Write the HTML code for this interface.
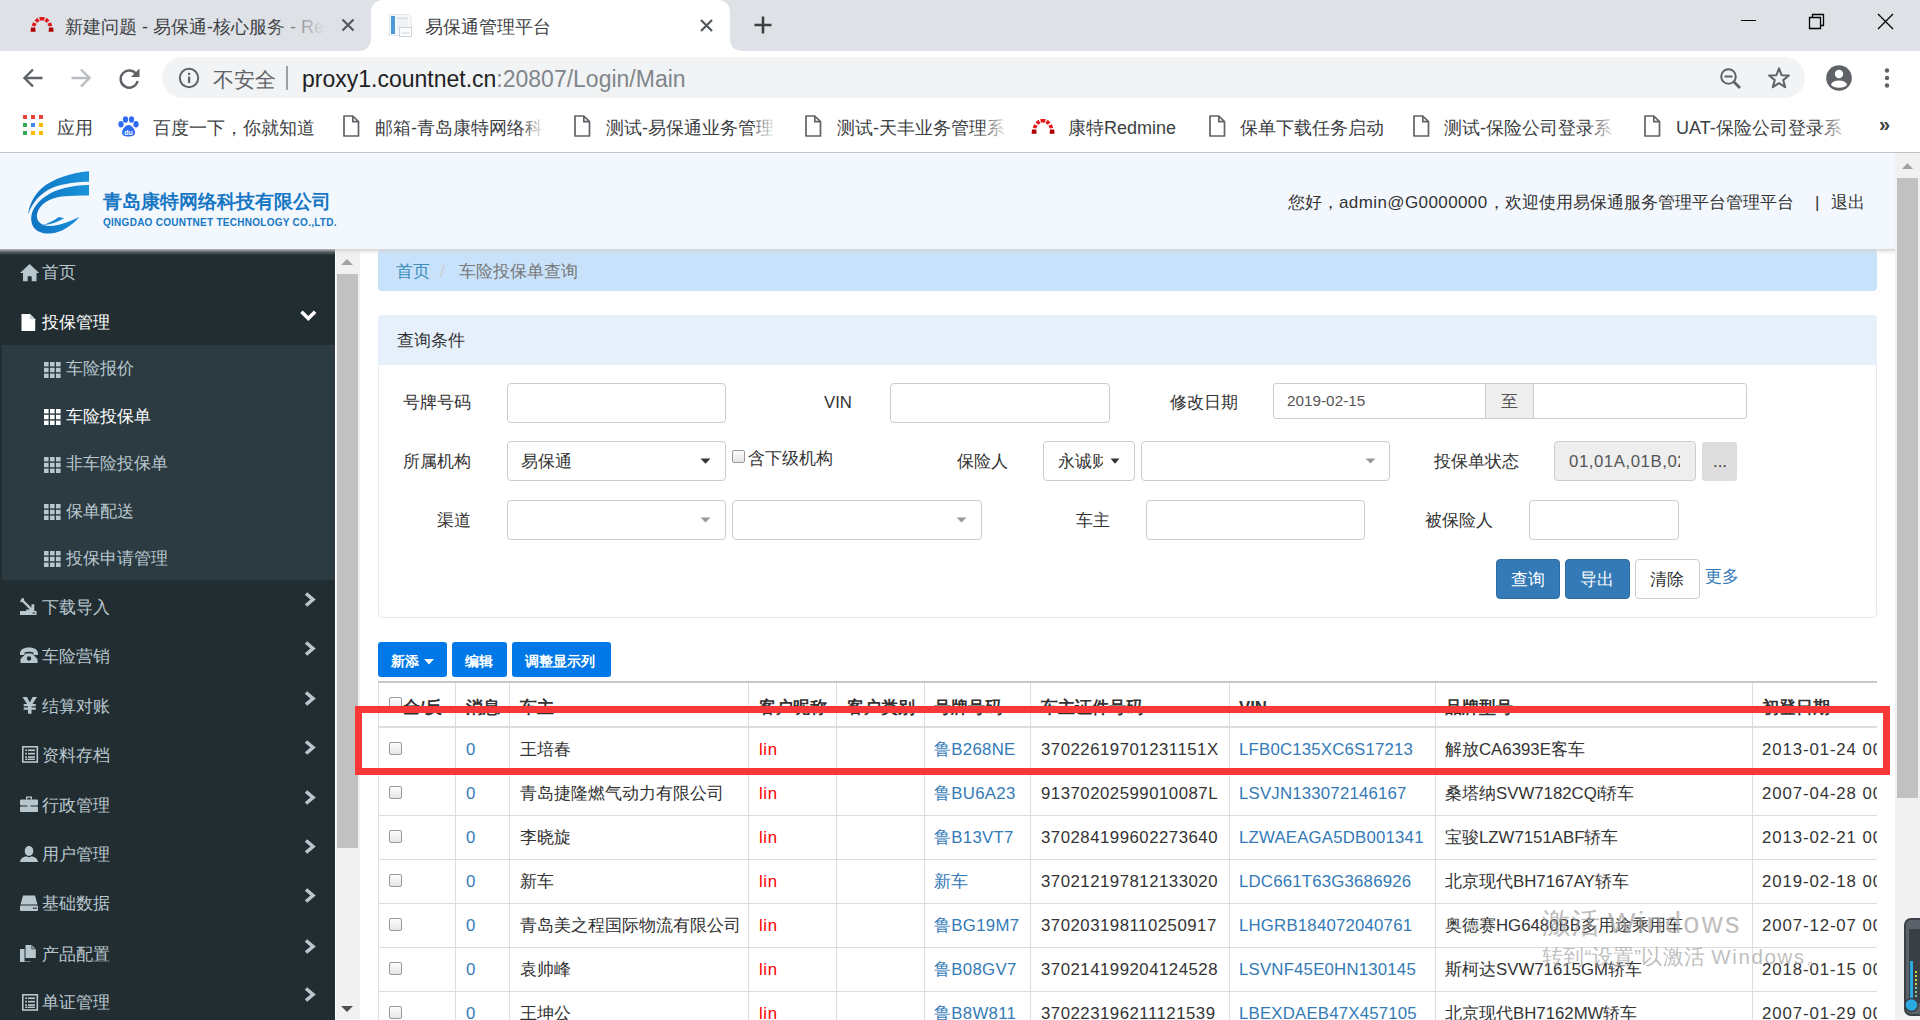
<!DOCTYPE html>
<html><head><meta charset="utf-8">
<style>
*{box-sizing:border-box;margin:0;padding:0}
html,body{width:1920px;height:1020px;overflow:hidden;font-family:"Liberation Sans",sans-serif;background:#fff;color:#333}
.a{position:absolute;white-space:nowrap;line-height:1.3}
svg{position:absolute;overflow:visible}
/* chrome */
#tabs{left:0;top:0;width:1920px;height:51px;background:#dee1e6}
.tt{font-size:18px;color:#3c4043;top:15.5px}
#toolbar{left:0;top:51px;width:1920px;height:53px;background:#fff}
#omni{left:162px;top:57px;width:1643px;height:41px;background:#f1f3f4;border-radius:21px}
#bm{left:0;top:104px;width:1920px;height:49px;background:#fff;border-bottom:1px solid #c4c4c4}
.bt{font-size:18px;color:#3c4043;top:117px}
/* page */
#hdr{left:0;top:153px;width:1895px;height:96px;background:#f3f8fe}
#side{left:0;top:249px;width:335px;height:771px;background:#222d32}
#sub{left:2px;top:345px;width:333px;height:235px;background:#2c3b41}
.mi{font-size:16.8px;color:#b8c7ce;left:42px}
.si{font-size:16.8px;color:#b8c7ce;left:66px}
#sscroll{left:336px;top:249px;width:24px;height:770px;background:#f1f1f1}
#sthumb{left:337px;top:274px;width:21px;height:574px;background:#c1c1c1}
#pscroll{left:1895px;top:153px;width:25px;height:867px;background:#f1f1f1}
#pthumb{left:1897px;top:178px;width:21px;height:620px;background:#c1c1c1}
#crumb{left:378px;top:249px;width:1499px;height:42px;background:#c8e2fb;border-radius:4px}
#panel{left:378px;top:315px;width:1499px;height:303px;border:1px solid #dfe9f4;border-radius:4px;background:#fff}
#phead{left:378px;top:315px;width:1499px;height:50px;background:#e6f0fb;border-radius:4px 4px 0 0}
.lbl{font-size:16.8px;color:#333;margin-top:2px}
.inp{border:1px solid #ccc;border-radius:4px;background:#fff}
.btnb{background:#0078e7;border-radius:3px;color:#fff;font-size:14px;text-align:center}
.tdline{background:#ddd}
.cell{font-size:16.8px;color:#333;margin-top:2px}
.lnk{color:#337ab7}
.red{color:#f00}
.ls{letter-spacing:0.5px}
.hd{font-size:16.8px;font-weight:bold;color:#333;margin-top:2px}
.cb{width:13px;height:13px;border:1px solid #999;border-radius:2px;background:linear-gradient(#fdfdfd,#e6e6e6)}
</style></head><body>
<!-- CHROME TABS -->
<div class="a" id="tabs"></div>
<svg style="left:358px;top:0" width="396" height="51" viewBox="0 0 396 51"><path d="M0 51 C8 51 13 47 13 38 V12 C13 5 18 0 25 0 H360 C367 0 372 5 372 12 V38 C372 47 377 51 385 51 Z" fill="#fff"/></svg>
<svg style="left:30px;top:16px" width="24" height="16" viewBox="0 0 24 16"><g fill="#c00"><path d="M1 11.5h4.2l0.4 4.3H0.6z" fill="#b10000"/><path d="M19 11.5h4.2l0.4 4.3h-5z" fill="#b10000"/><path d="M1.8 9.8l1.2-3.6 3.6 1.6-1.4 2.8z" fill="#e0181b"/><path d="M22.2 9.8l-1.2-3.6-3.6 1.6 1.4 2.8z" fill="#e0181b"/><path d="M4.5 4.6l2.8-2.8 2.3 3.3-2.3 1.6z" fill="#e0181b"/><path d="M19.5 4.6l-2.8-2.8-2.3 3.3 2.3 1.6z" fill="#e0181b"/><path d="M9.3 1l5.4 0-0.6 3.6h-4.2z" fill="#e0181b"/></g></svg>
<div class="a tt" style="left:65px">新建问题 - 易保通-核心服务 - Re</div>
<div class="a" style="left:270px;top:10px;width:62px;height:32px;background:linear-gradient(90deg,rgba(222,225,230,0),#dee1e6 90%)"></div>
<svg style="left:341px;top:18px" width="14" height="14" viewBox="0 0 14 14"><path d="M1.5 1.5L12.5 12.5M12.5 1.5L1.5 12.5" stroke="#54585d" stroke-width="2.2"/></svg>
<svg style="left:389px;top:13px" width="24" height="24" viewBox="0 0 24 24"><path d="M0.5 1.5H19L22 4.5V22.5H0.5z" fill="#f7f8fa" stroke="#e3e6ea"/><rect x="2" y="3" width="4" height="18" fill="#4e9ad8"/><rect x="8" y="4" width="11" height="3" fill="#e2e6eb"/><rect x="8" y="8" width="11" height="9" fill="#eef1f5"/><rect x="10.5" y="14.5" width="12" height="9" fill="#fbfcfd" stroke="#cfd4da"/><rect x="12.5" y="19" width="8" height="2" fill="#e6e9ed"/></svg>
<div class="a tt" style="left:425px">易保通管理平台</div>
<svg style="left:700px;top:19px" width="13" height="13" viewBox="0 0 13 13"><path d="M1 1L12 12M12 1L1 12" stroke="#54585d" stroke-width="2.2"/></svg>
<svg style="left:753px;top:15px" width="20" height="20" viewBox="0 0 20 20"><path d="M10 1.5V18.5M1.5 10H18.5" stroke="#3c4043" stroke-width="2.6"/></svg>
<div class="a" style="left:1741px;top:20px;width:15px;height:1px;background:#000"></div>
<svg style="left:1808px;top:13px" width="18" height="17" viewBox="0 0 18 17"><path d="M1.5 4.5h11v11h-11z M4.5 4.5v-3h11v11h-3" fill="none" stroke="#000" stroke-width="1.3"/></svg>
<svg style="left:1877px;top:13px" width="17" height="17" viewBox="0 0 17 17"><path d="M1 1L16 16M16 1L1 16" stroke="#000" stroke-width="1.3"/></svg>
<div class="a" id="toolbar"></div>
<svg style="left:22px;top:67px" width="22" height="22" viewBox="0 0 22 22"><path d="M20.5 11H3.5M11 2.5L2.5 11L11 19.5" fill="none" stroke="#5f6368" stroke-width="2.4"/></svg>
<svg style="left:70px;top:67px" width="22" height="22" viewBox="0 0 22 22"><path d="M1.5 11H18.5M11 2.5L19.5 11L11 19.5" fill="none" stroke="#b9bcc0" stroke-width="2.4"/></svg>
<svg style="left:118px;top:67px" width="23" height="23" viewBox="0 0 23 23"><path d="M18.5 7.5A8.6 8.6 0 1 0 19.6 14" fill="none" stroke="#5f6368" stroke-width="2.4"/><path d="M21.5 1.5V10H13z" fill="#5f6368"/></svg>
<div class="a" id="omni"></div>
<svg style="left:178px;top:67px" width="22" height="22" viewBox="0 0 22 22"><circle cx="11" cy="11" r="9.2" fill="none" stroke="#5f6368" stroke-width="2"/><rect x="10" y="9.5" width="2.2" height="6.5" fill="#5f6368"/><rect x="10" y="5.8" width="2.2" height="2.2" fill="#5f6368"/></svg>
<div class="a" style="left:213px;top:65.5px;font-size:21px;color:#5f6368">不安全</div>
<div class="a" style="left:286px;top:66px;width:1.5px;height:24px;background:#9aa0a6"></div>
<div class="a" style="left:302px;top:65px;font-size:23px;color:#202124">proxy1.countnet.cn<span style="color:#80868b">:20807/Login/Main</span></div>
<svg style="left:1719px;top:67px" width="24" height="24" viewBox="0 0 24 24"><circle cx="9.5" cy="9.5" r="7.3" fill="none" stroke="#5f6368" stroke-width="2"/><path d="M5.5 9.5h8" stroke="#5f6368" stroke-width="2"/><path d="M14.8 14.8l6.2 6.2" stroke="#5f6368" stroke-width="2.8"/></svg>
<svg style="left:1767px;top:66px" width="24" height="24" viewBox="0 0 24 24"><path d="M12 2.3l2.6 6.9 7.3 0.3-5.7 4.6 2 7.1L12 17.2 5.8 21.2l2-7.1-5.7-4.6 7.3-0.3z" fill="none" stroke="#5f6368" stroke-width="2" stroke-linejoin="round"/></svg>
<svg style="left:1826px;top:65px" width="26" height="26" viewBox="0 0 26 26"><circle cx="13" cy="13" r="12.8" fill="#5f6368"/><circle cx="13" cy="9" r="4.2" fill="#fff"/><ellipse cx="13" cy="19.2" rx="7.8" ry="3.6" fill="#fff"/></svg>
<svg style="left:1883px;top:67px" width="8" height="22" viewBox="0 0 8 22"><circle cx="4" cy="3.5" r="2.2" fill="#5f6368"/><circle cx="4" cy="11" r="2.2" fill="#5f6368"/><circle cx="4" cy="18.5" r="2.2" fill="#5f6368"/></svg>
<div class="a" id="bm"></div>
<svg style="left:23px;top:115px" width="20" height="20" viewBox="0 0 20 20"><rect x="0" y="0" width="4" height="4" fill="#ea4335"/><rect x="8" y="0" width="4" height="4" fill="#ea4335"/><rect x="16" y="0" width="4" height="4" fill="#ea4335"/><rect x="0" y="8" width="4" height="4" fill="#34a853"/><rect x="8" y="8" width="4" height="4" fill="#4285f4"/><rect x="16" y="8" width="4" height="4" fill="#fbbc05"/><rect x="0" y="16" width="4" height="4" fill="#34a853"/><rect x="8" y="16" width="4" height="4" fill="#fbbc05"/><rect x="16" y="16" width="4" height="4" fill="#fbbc05"/></svg>
<div class="a bt" style="left:57px">应用</div>
<svg style="left:118px;top:116px" width="21" height="21" viewBox="0 0 21 21"><g fill="#2f6cf6"><ellipse cx="3" cy="8.3" rx="2.6" ry="3.2"/><ellipse cx="7.5" cy="3.5" rx="2.6" ry="3.2"/><ellipse cx="13.5" cy="3.5" rx="2.6" ry="3.2"/><ellipse cx="18" cy="8.3" rx="2.6" ry="3.2"/><path d="M10.5 9C7 9 4 14 4 16.5 4 19.5 6.5 20.5 10.5 20.5 14.5 20.5 17 19.5 17 16.5 17 14 14 9 10.5 9z"/></g><text x="10.5" y="18.6" font-size="7" font-weight="bold" fill="#fff" text-anchor="middle" font-family="Liberation Sans">du</text></svg>
<div class="a bt" style="left:153px">百度一下，你就知道</div>
<svg style="left:343px;top:115px" width="17" height="22" viewBox="0 0 17 22"><path d="M1 1H9.8L15.5 6.7V21H1z M9.8 1V6.7H15.5" fill="none" stroke="#5f6368" stroke-width="1.7" stroke-linejoin="round"/></svg>
<div class="a bt" style="left:375px">邮箱-青岛康特网络科</div>
<svg style="left:574px;top:115px" width="17" height="22" viewBox="0 0 17 22"><path d="M1 1H9.8L15.5 6.7V21H1z M9.8 1V6.7H15.5" fill="none" stroke="#5f6368" stroke-width="1.7" stroke-linejoin="round"/></svg>
<div class="a bt" style="left:606px">测试-易保通业务管理</div>
<svg style="left:805px;top:115px" width="17" height="22" viewBox="0 0 17 22"><path d="M1 1H9.8L15.5 6.7V21H1z M9.8 1V6.7H15.5" fill="none" stroke="#5f6368" stroke-width="1.7" stroke-linejoin="round"/></svg>
<div class="a bt" style="left:837px">测试-天丰业务管理系</div>
<svg style="left:1031px;top:118px" width="24.0" height="16.0" viewBox="0 0 24 16"><g fill="#c00"><path d="M1 11.5h4.2l0.4 4.3H0.6z" fill="#b10000"/><path d="M19 11.5h4.2l0.4 4.3h-5z" fill="#b10000"/><path d="M1.8 9.8l1.2-3.6 3.6 1.6-1.4 2.8z" fill="#e0181b"/><path d="M22.2 9.8l-1.2-3.6-3.6 1.6 1.4 2.8z" fill="#e0181b"/><path d="M4.5 4.6l2.8-2.8 2.3 3.3-2.3 1.6z" fill="#e0181b"/><path d="M19.5 4.6l-2.8-2.8-2.3 3.3 2.3 1.6z" fill="#e0181b"/><path d="M9.3 1l5.4 0-0.6 3.6h-4.2z" fill="#e0181b"/></g></svg>
<div class="a bt" style="left:1068px">康特Redmine</div>
<svg style="left:1209px;top:115px" width="17" height="22" viewBox="0 0 17 22"><path d="M1 1H9.8L15.5 6.7V21H1z M9.8 1V6.7H15.5" fill="none" stroke="#5f6368" stroke-width="1.7" stroke-linejoin="round"/></svg>
<div class="a bt" style="left:1240px">保单下载任务启动</div>
<svg style="left:1413px;top:115px" width="17" height="22" viewBox="0 0 17 22"><path d="M1 1H9.8L15.5 6.7V21H1z M9.8 1V6.7H15.5" fill="none" stroke="#5f6368" stroke-width="1.7" stroke-linejoin="round"/></svg>
<div class="a bt" style="left:1444px">测试-保险公司登录系</div>
<svg style="left:1644px;top:115px" width="17" height="22" viewBox="0 0 17 22"><path d="M1 1H9.8L15.5 6.7V21H1z M9.8 1V6.7H15.5" fill="none" stroke="#5f6368" stroke-width="1.7" stroke-linejoin="round"/></svg>
<div class="a bt" style="left:1676px">UAT-保险公司登录系</div>
<div class="a" style="left:520px;top:112px;width:30px;height:30px;background:linear-gradient(90deg,rgba(255,255,255,0),#fff 85%)"></div>
<div class="a" style="left:751px;top:112px;width:30px;height:30px;background:linear-gradient(90deg,rgba(255,255,255,0),#fff 85%)"></div>
<div class="a" style="left:982px;top:112px;width:30px;height:30px;background:linear-gradient(90deg,rgba(255,255,255,0),#fff 85%)"></div>
<div class="a" style="left:1590px;top:112px;width:30px;height:30px;background:linear-gradient(90deg,rgba(255,255,255,0),#fff 85%)"></div>
<div class="a" style="left:1822px;top:112px;width:30px;height:30px;background:linear-gradient(90deg,rgba(255,255,255,0),#fff 85%)"></div>
<div class="a" style="left:1879px;top:112px;font-size:20px;font-weight:bold;color:#3c4043;line-height:24px">&raquo;</div>

<!-- PAGE HEADER -->
<div class="a" id="hdr"></div>
<svg style="left:20px;top:160px" width="80" height="85" viewBox="0 0 80 85"><defs><linearGradient id="lg" x1="0" y1="0" x2="1" y2="0"><stop offset="0" stop-color="#0f74c4"/><stop offset="1" stop-color="#1a92d9"/></linearGradient></defs>
<path d="M69 11.2C50 13 32 19 22 28C13 36 9 46 8.1 54.6C12 43 20 33 33 27.5C44 23.5 58 21.8 69 21.8Z" fill="url(#lg)"/>
<path d="M69 25C52 25 36 29 26 36C14 44 10 54 11.5 62C13 71 22 74 30 73.5C42 73 52 65 59.6 57C52 60 40 66 30 66C20 66 16 60 17 54C19 44 30 38 42 36.5C50 35.5 60 35.4 69 35.4Z" fill="url(#lg)"/>
<path d="M22.5 65C30 63 36 59 39 57L44 58.3C38 62 30 65 22.5 65Z" fill="#1585d0"/></svg>

<div class="a" style="left:103px;top:190px;font-size:19px;font-weight:bold;color:#1777c4">青岛康特网络科技有限公司</div>
<div class="a" style="left:103px;top:216px;font-size:10px;font-weight:bold;color:#1777c4;letter-spacing:0.27px">QINGDAO COUNTNET TECHNOLOGY CO.,LTD.</div>
<div class="a" style="left:1288px;top:191.5px;font-size:17px;color:#333">您好，<span style="letter-spacing:0.4px">admin@G0000000</span>，欢迎使用易保通服务管理平台管理平台</div>
<div class="a" style="left:1815px;top:191.5px;font-size:17px;color:#333">|</div><div class="a" style="left:1831px;top:191.5px;font-size:17px;color:#333">退出</div>

<!-- SIDEBAR -->
<div class="a" id="side"></div>

<div class="a" id="sub"></div>
<svg style="left:20px;top:264px" width="20" height="18" viewBox="0 0 20 18"><path d="M9.6 0L19.2 9H16.5V17.3H11.7V12.3H7.7V17.3H3V9H0z" fill="#b8c7ce"/></svg>
<div class="a mi" style="top:262px">首页</div>
<svg style="left:21px;top:314px" width="15" height="18" viewBox="0 0 15 18"><path d="M0.5 0H9L14.2 5.2V17H0.5z" fill="#fff"/><path d="M9 0V5.2H14.2" fill="#c9d3da"/></svg>
<div class="a mi" style="top:312px;color:#fff">投保管理</div>
<svg style="left:299px;top:308px" width="19" height="15" viewBox="0 0 19 15"><path d="M2.5 3.8L9.3 10.5L16.1 3.8" fill="none" stroke="#fff" stroke-width="3.6"/></svg>
<svg style="left:44px;top:361.8px" width="17" height="17" viewBox="0 0 17 17"><rect x="0" y="0.0" width="4.6" height="4.4" fill="#b8c7ce"/><rect x="0" y="5.8" width="4.6" height="4.4" fill="#b8c7ce"/><rect x="0" y="11.6" width="4.6" height="4.4" fill="#b8c7ce"/><rect x="6" y="0.0" width="4.6" height="4.4" fill="#b8c7ce"/><rect x="6" y="5.8" width="4.6" height="4.4" fill="#b8c7ce"/><rect x="6" y="11.6" width="4.6" height="4.4" fill="#b8c7ce"/><rect x="12" y="0.0" width="4.6" height="4.4" fill="#b8c7ce"/><rect x="12" y="5.8" width="4.6" height="4.4" fill="#b8c7ce"/><rect x="12" y="11.6" width="4.6" height="4.4" fill="#b8c7ce"/></svg>
<div class="a si" style="top:358px;color:#b8c7ce">车险报价</div>
<svg style="left:44px;top:409.3px" width="17" height="17" viewBox="0 0 17 17"><rect x="0" y="0.0" width="4.6" height="4.4" fill="#fff"/><rect x="0" y="5.8" width="4.6" height="4.4" fill="#fff"/><rect x="0" y="11.6" width="4.6" height="4.4" fill="#fff"/><rect x="6" y="0.0" width="4.6" height="4.4" fill="#fff"/><rect x="6" y="5.8" width="4.6" height="4.4" fill="#fff"/><rect x="6" y="11.6" width="4.6" height="4.4" fill="#fff"/><rect x="12" y="0.0" width="4.6" height="4.4" fill="#fff"/><rect x="12" y="5.8" width="4.6" height="4.4" fill="#fff"/><rect x="12" y="11.6" width="4.6" height="4.4" fill="#fff"/></svg>
<div class="a si" style="top:405.5px;color:#fff">车险投保单</div>
<svg style="left:44px;top:456.8px" width="17" height="17" viewBox="0 0 17 17"><rect x="0" y="0.0" width="4.6" height="4.4" fill="#b8c7ce"/><rect x="0" y="5.8" width="4.6" height="4.4" fill="#b8c7ce"/><rect x="0" y="11.6" width="4.6" height="4.4" fill="#b8c7ce"/><rect x="6" y="0.0" width="4.6" height="4.4" fill="#b8c7ce"/><rect x="6" y="5.8" width="4.6" height="4.4" fill="#b8c7ce"/><rect x="6" y="11.6" width="4.6" height="4.4" fill="#b8c7ce"/><rect x="12" y="0.0" width="4.6" height="4.4" fill="#b8c7ce"/><rect x="12" y="5.8" width="4.6" height="4.4" fill="#b8c7ce"/><rect x="12" y="11.6" width="4.6" height="4.4" fill="#b8c7ce"/></svg>
<div class="a si" style="top:453px;color:#b8c7ce">非车险投保单</div>
<svg style="left:44px;top:504.3px" width="17" height="17" viewBox="0 0 17 17"><rect x="0" y="0.0" width="4.6" height="4.4" fill="#b8c7ce"/><rect x="0" y="5.8" width="4.6" height="4.4" fill="#b8c7ce"/><rect x="0" y="11.6" width="4.6" height="4.4" fill="#b8c7ce"/><rect x="6" y="0.0" width="4.6" height="4.4" fill="#b8c7ce"/><rect x="6" y="5.8" width="4.6" height="4.4" fill="#b8c7ce"/><rect x="6" y="11.6" width="4.6" height="4.4" fill="#b8c7ce"/><rect x="12" y="0.0" width="4.6" height="4.4" fill="#b8c7ce"/><rect x="12" y="5.8" width="4.6" height="4.4" fill="#b8c7ce"/><rect x="12" y="11.6" width="4.6" height="4.4" fill="#b8c7ce"/></svg>
<div class="a si" style="top:500.5px;color:#b8c7ce">保单配送</div>
<svg style="left:44px;top:551.3px" width="17" height="17" viewBox="0 0 17 17"><rect x="0" y="0.0" width="4.6" height="4.4" fill="#b8c7ce"/><rect x="0" y="5.8" width="4.6" height="4.4" fill="#b8c7ce"/><rect x="0" y="11.6" width="4.6" height="4.4" fill="#b8c7ce"/><rect x="6" y="0.0" width="4.6" height="4.4" fill="#b8c7ce"/><rect x="6" y="5.8" width="4.6" height="4.4" fill="#b8c7ce"/><rect x="6" y="11.6" width="4.6" height="4.4" fill="#b8c7ce"/><rect x="12" y="0.0" width="4.6" height="4.4" fill="#b8c7ce"/><rect x="12" y="5.8" width="4.6" height="4.4" fill="#b8c7ce"/><rect x="12" y="11.6" width="4.6" height="4.4" fill="#b8c7ce"/></svg>
<div class="a si" style="top:547.5px;color:#b8c7ce">投保申请管理</div>
<svg style="left:20px;top:598.1px" width="18" height="18" viewBox="0 0 18 18"><path d="M1.5 0.5L3.8 0 4.2 2.5 11.5 9.8V6.2H14.3V14.3H6.2V11.5H9.8L2.5 4.2 0 3.8z" fill="#b8c7ce"/><rect x="0" y="13" width="16.5" height="4" fill="#b8c7ce"/><rect x="12.5" y="14.6" width="2.5" height="1" fill="#222d32"/></svg>
<div class="a mi" style="top:596.6px">下载导入</div>
<svg style="left:303px;top:590.6px" width="14" height="18" viewBox="0 0 14 18"><path d="M3 2.5L10 8.5L3 14.5" fill="none" stroke="#b8c7ce" stroke-width="3.6"/></svg>
<svg style="left:20px;top:647.1px" width="18" height="18" viewBox="0 0 18 18"><path d="M0 6.5C0 2 5 0.5 9 0.5 13 0.5 18 2 18 6.5V8H13.5V5.8C12.5 5 10.8 4.7 9 4.7 7.2 4.7 5.5 5 4.5 5.8V8H0z" fill="#b8c7ce"/><path d="M6 6.5H12L17.5 12V16H0.5V12z" fill="#b8c7ce"/><circle cx="9" cy="11.5" r="2.2" fill="#222d32"/></svg>
<div class="a mi" style="top:645.6px">车险营销</div>
<svg style="left:303px;top:639.6px" width="14" height="18" viewBox="0 0 14 18"><path d="M3 2.5L10 8.5L3 14.5" fill="none" stroke="#b8c7ce" stroke-width="3.6"/></svg>
<svg style="left:22px;top:697.1px" width="18" height="18" viewBox="0 0 18 18"><path d="M0.5 0H5L7.8 5.5 10.6 0H15L10.5 7H13.8V9.3H9.5V10.5H13.8V12.8H9.5V16.7H6V12.8H1.7V10.5H6V9.3H1.7V7H5z" fill="#b8c7ce"/></svg>
<div class="a mi" style="top:695.6px">结算对账</div>
<svg style="left:303px;top:689.6px" width="14" height="18" viewBox="0 0 14 18"><path d="M3 2.5L10 8.5L3 14.5" fill="none" stroke="#b8c7ce" stroke-width="3.6"/></svg>
<svg style="left:22px;top:746.2px" width="18" height="18" viewBox="0 0 18 18"><rect x="0.8" y="0.8" width="14.5" height="15.2" fill="none" stroke="#b8c7ce" stroke-width="1.6"/><rect x="3.2" y="3.4" width="9.7" height="1.7" fill="#b8c7ce"/><rect x="3.2" y="6.8" width="9.7" height="1.7" fill="#b8c7ce"/><rect x="3.2" y="10.2" width="9.7" height="1.7" fill="#b8c7ce"/><rect x="3.2" y="12.6" width="9.7" height="1.4" fill="#b8c7ce"/><rect x="5" y="3.4" width="1" height="10" fill="#222d32"/></svg>
<div class="a mi" style="top:744.7px">资料存档</div>
<svg style="left:303px;top:738.7px" width="14" height="18" viewBox="0 0 14 18"><path d="M3 2.5L10 8.5L3 14.5" fill="none" stroke="#b8c7ce" stroke-width="3.6"/></svg>
<svg style="left:20px;top:796.0px" width="18" height="18" viewBox="0 0 18 18"><path d="M6 0.5H12V3.5H10.7V1.8H7.3V3.5H6z" fill="#b8c7ce"/><rect x="0" y="3.5" width="18" height="6" rx="1.2" fill="#b8c7ce"/><rect x="0" y="10.5" width="18" height="5.5" rx="1" fill="#b8c7ce"/><rect x="7.5" y="8.3" width="3" height="3.2" fill="#b8c7ce"/></svg>
<div class="a mi" style="top:794.5px">行政管理</div>
<svg style="left:303px;top:788.5px" width="14" height="18" viewBox="0 0 14 18"><path d="M3 2.5L10 8.5L3 14.5" fill="none" stroke="#b8c7ce" stroke-width="3.6"/></svg>
<svg style="left:20px;top:845.9px" width="18" height="18" viewBox="0 0 18 18"><ellipse cx="9" cy="5" rx="4.3" ry="5" fill="#b8c7ce"/><path d="M0 16C0.5 12.5 3 11 6.5 10.3 7.5 11 8.2 11.2 9 11.2 9.8 11.2 10.5 11 11.5 10.3 15 11 17.5 12.5 18 16z" fill="#b8c7ce"/></svg>
<div class="a mi" style="top:844.4px">用户管理</div>
<svg style="left:303px;top:838.4px" width="14" height="18" viewBox="0 0 14 18"><path d="M3 2.5L10 8.5L3 14.5" fill="none" stroke="#b8c7ce" stroke-width="3.6"/></svg>
<svg style="left:20px;top:894.8px" width="18" height="18" viewBox="0 0 18 18"><path d="M3 0.5H15L17.5 9.5H0.5z" fill="#b8c7ce"/><rect x="0" y="10.5" width="18" height="5.5" rx="1" fill="#b8c7ce"/><rect x="13" y="12.5" width="1.5" height="1.5" fill="#222d32"/><rect x="15.2" y="12.5" width="1.5" height="1.5" fill="#222d32"/></svg>
<div class="a mi" style="top:893.3px">基础数据</div>
<svg style="left:303px;top:887.3px" width="14" height="18" viewBox="0 0 14 18"><path d="M3 2.5L10 8.5L3 14.5" fill="none" stroke="#b8c7ce" stroke-width="3.6"/></svg>
<svg style="left:20px;top:945.4px" width="18" height="18" viewBox="0 0 18 18"><path d="M0 4H4.5V16.5H10.5V17H0z" fill="#b8c7ce"/><path d="M5.5 0H11.5L15.8 4.3V13H5.5z" fill="#b8c7ce" /><path d="M11.5 0V4.3H15.8" fill="#222d32"/><path d="M12.3 0.8V3.5H15" fill="#b8c7ce"/><path d="M0 4H4.5V17H10.5" fill="none"/></svg>
<div class="a mi" style="top:943.9px">产品配置</div>
<svg style="left:303px;top:937.9px" width="14" height="18" viewBox="0 0 14 18"><path d="M3 2.5L10 8.5L3 14.5" fill="none" stroke="#b8c7ce" stroke-width="3.6"/></svg>
<svg style="left:22px;top:993.5px" width="18" height="18" viewBox="0 0 18 18"><rect x="0.8" y="0.8" width="14.5" height="15.2" fill="none" stroke="#b8c7ce" stroke-width="1.6"/><rect x="3.2" y="3.4" width="9.7" height="1.7" fill="#b8c7ce"/><rect x="3.2" y="6.8" width="9.7" height="1.7" fill="#b8c7ce"/><rect x="3.2" y="10.2" width="9.7" height="1.7" fill="#b8c7ce"/><rect x="3.2" y="12.6" width="9.7" height="1.4" fill="#b8c7ce"/><rect x="5" y="3.4" width="1" height="10" fill="#222d32"/></svg>
<div class="a mi" style="top:992px">单证管理</div>
<svg style="left:303px;top:986px" width="14" height="18" viewBox="0 0 14 18"><path d="M3 2.5L10 8.5L3 14.5" fill="none" stroke="#b8c7ce" stroke-width="3.6"/></svg>
<div class="a" id="sscroll"></div>
<div class="a" id="sthumb"></div>

<!-- CONTENT -->
<div class="a" id="crumb"></div>
<div class="a" style="left:396px;top:261px;font-size:16.8px;color:#3c8dbc">首页</div>
<div class="a" style="left:440px;top:261px;font-size:16.8px;color:#ccc">/</div>
<div class="a" style="left:459px;top:261px;font-size:16.8px;color:#777">车险投保单查询</div>

<div class="a" id="panel"></div>
<div class="a" id="phead"></div>
<div class="a lbl" style="left:397px;top:328px">查询条件</div>


<!-- FORM ROW1 -->
<div class="a lbl" style="left:403px;top:390px">号牌号码</div>
<div class="a inp" style="left:507px;top:383px;width:219px;height:40px"></div>
<div class="a lbl" style="left:824px;top:390px">VIN</div>
<div class="a inp" style="left:890px;top:383px;width:220px;height:40px"></div>
<div class="a lbl" style="left:1170px;top:390px">修改日期</div>
<div class="a inp" style="left:1273px;top:383px;width:474px;height:36px;border-radius:3px"></div>
<div class="a" style="left:1485px;top:384px;width:49px;height:34px;background:#eee;border-left:1px solid #ccc;border-right:1px solid #ccc"></div>
<div class="a" style="left:1287px;top:391px;font-size:15.3px;color:#555">2019-02-15</div>
<div class="a lbl" style="left:1501px;top:389px;color:#555">至</div>
<!-- FORM ROW2 -->
<div class="a lbl" style="left:403px;top:449px">所属机构</div>
<div class="a inp" style="left:507px;top:441px;width:219px;height:40px"></div>
<div class="a lbl" style="left:521px;top:449px">易保通</div>
<div class="a cb" style="left:732px;top:450px"></div>
<div class="a lbl" style="left:748px;top:446px">含下级机构</div>
<div class="a lbl" style="left:957px;top:449px">保险人</div>
<div class="a inp" style="left:1043px;top:441px;width:92px;height:40px"></div>
<div class="a lbl" style="left:1058px;top:449px;width:45px;overflow:hidden">永诚财</div>
<div class="a inp" style="left:1141px;top:441px;width:249px;height:40px"></div>
<div class="a lbl" style="left:1434px;top:449px">投保单状态</div>
<div class="a inp" style="left:1554px;top:441px;width:142px;height:40px;background:#eee"></div>
<div class="a lbl" style="left:1569px;top:449px;color:#555;width:111px;overflow:hidden;letter-spacing:0.55px">01,01A,01B,02</div>
<div class="a" style="left:1702px;top:442px;width:35px;height:39px;background:#ddd;border-radius:3px"></div>
<div class="a lbl" style="left:1713px;top:449px">...</div>
<!-- FORM ROW3 -->
<div class="a lbl" style="left:437px;top:508px">渠道</div>
<div class="a inp" style="left:507px;top:500px;width:219px;height:40px"></div>
<div class="a inp" style="left:732px;top:500px;width:250px;height:40px"></div>
<div class="a lbl" style="left:1076px;top:508px">车主</div>
<div class="a inp" style="left:1146px;top:500px;width:219px;height:40px"></div>
<div class="a lbl" style="left:1425px;top:508px">被保险人</div>
<div class="a inp" style="left:1529px;top:500px;width:150px;height:40px"></div>
<!-- BUTTONS -->
<div class="a" style="left:1496px;top:559px;width:64px;height:40px;background:#337ab7;border:1px solid #2e6da4;border-radius:4px"></div>
<div class="a lbl" style="left:1511px;top:567px;color:#fff">查询</div>
<div class="a" style="left:1565px;top:559px;width:65px;height:40px;background:#337ab7;border:1px solid #2e6da4;border-radius:4px"></div>
<div class="a lbl" style="left:1580px;top:567px;color:#fff">导出</div>
<div class="a" style="left:1635px;top:559px;width:65px;height:40px;background:#fff;border:1px solid #ccc;border-radius:4px"></div>
<div class="a lbl" style="left:1650px;top:567px">清除</div>
<div class="a lbl" style="left:1705px;top:564px;color:#337ab7">更多</div>


<svg style="left:700px;top:458px" width="11" height="6" viewBox="0 0 11 6"><path d="M0.5 0.5H10.5L5.5 5.8z" fill="#333"/></svg>
<svg style="left:1110px;top:458px" width="10" height="6" viewBox="0 0 10 6"><path d="M0.5 0.5H9.5L5 5.8z" fill="#333"/></svg>
<svg style="left:700px;top:517px" width="11" height="6" viewBox="0 0 11 6"><path d="M0.5 0.5H10.5L5.5 5.5z" fill="#999"/></svg>
<svg style="left:956px;top:517px" width="11" height="6" viewBox="0 0 11 6"><path d="M0.5 0.5H10.5L5.5 5.5z" fill="#999"/></svg>
<svg style="left:1365px;top:458px" width="11" height="6" viewBox="0 0 11 6"><path d="M0.5 0.5H10.5L5.5 5.5z" fill="#999"/></svg>
<!-- TABLE TOOLBAR -->
<div class="a btnb" style="left:378px;top:642px;width:69px;height:35px"></div>
<div class="a" style="left:391px;top:652px;font-size:14.4px;color:#fff;font-weight:bold">新添</div><svg style="left:424px;top:659px" width="10" height="6" viewBox="0 0 10 6"><path d="M0 0H10L5 5.5z" fill="#fff"/></svg>
<div class="a btnb" style="left:452px;top:642px;width:55px;height:35px"></div>
<div class="a" style="left:465px;top:652px;font-size:14.4px;color:#fff;font-weight:bold">编辑</div>
<div class="a btnb" style="left:512px;top:642px;width:99px;height:35px"></div>
<div class="a" style="left:525px;top:652px;font-size:14.4px;color:#fff;font-weight:bold">调整显示列</div>

<!-- TABLE -->
<div class="a" id="tbl" style="left:378px;top:681px;width:1499px;height:339px;overflow:hidden">
<div class="a" style="left:0;top:0;width:1499px;height:2px;background:#c8c8c8"></div>
<div class="a" style="left:0;top:45px;width:1499px;height:2px;background:#ddd"></div>
<div class="a" style="left:0px;top:2px;width:1px;height:339px;background:#ddd"></div>
<div class="a" style="left:77px;top:2px;width:1px;height:339px;background:#ddd"></div>
<div class="a" style="left:131px;top:2px;width:1px;height:339px;background:#ddd"></div>
<div class="a" style="left:370px;top:2px;width:1px;height:339px;background:#ddd"></div>
<div class="a" style="left:458px;top:2px;width:1px;height:339px;background:#ddd"></div>
<div class="a" style="left:546px;top:2px;width:1px;height:339px;background:#ddd"></div>
<div class="a" style="left:652px;top:2px;width:1px;height:339px;background:#ddd"></div>
<div class="a" style="left:851px;top:2px;width:1px;height:339px;background:#ddd"></div>
<div class="a" style="left:1057px;top:2px;width:1px;height:339px;background:#ddd"></div>
<div class="a" style="left:1374px;top:2px;width:1px;height:339px;background:#ddd"></div>
<div class="a hd" style="left:25px;top:14px">全/反</div>
<div class="a hd" style="left:88px;top:14px">消息</div>
<div class="a hd" style="left:142px;top:14px">车主</div>
<div class="a hd" style="left:381px;top:14px">客户昵称</div>
<div class="a hd" style="left:469px;top:14px">客户类别</div>
<div class="a hd" style="left:556px;top:14px">号牌号码</div>
<div class="a hd" style="left:663px;top:14px">车主证件号码</div>
<div class="a hd" style="left:861px;top:14px">VIN</div>
<div class="a hd" style="left:1067px;top:14px">品牌型号</div>
<div class="a hd" style="left:1384px;top:14px">初登日期</div>
<div class="a cb" style="left:11px;top:16px"></div>
<div class="a cb" style="left:11px;top:61px"></div>
<div class="a cell lnk" style="left:88px;top:55.5px">0</div>
<div class="a cell" style="left:142px;top:55.5px">王培春</div>
<div class="a cell red" style="left:381px;top:55.5px;letter-spacing:0.6px">lin</div>
<div class="a cell lnk" style="letter-spacing:0.3px;left:556px;top:55.5px">鲁B268NE</div>
<div class="a cell ls" style="left:663px;top:55.5px">37022619701231151X</div>
<div class="a cell lnk" style="letter-spacing:0.2px;left:861px;top:55.5px">LFB0C135XC6S17213</div>
<div class="a cell" style="left:1067px;top:55.5px">解放CA6393E客车</div>
<div class="a cell" style="letter-spacing:0.9px;left:1384px;top:55.5px">2013-01-24 00:00</div>
<div class="a" style="left:0;top:90px;width:1499px;height:1px;background:#ddd"></div>
<div class="a cb" style="left:11px;top:105px"></div>
<div class="a cell lnk" style="left:88px;top:99.5px">0</div>
<div class="a cell" style="left:142px;top:99.5px">青岛捷隆燃气动力有限公司</div>
<div class="a cell red" style="left:381px;top:99.5px;letter-spacing:0.6px">lin</div>
<div class="a cell lnk" style="letter-spacing:0.3px;left:556px;top:99.5px">鲁BU6A23</div>
<div class="a cell ls" style="left:663px;top:99.5px">91370202599010087L</div>
<div class="a cell lnk" style="letter-spacing:0.2px;left:861px;top:99.5px">LSVJN133072146167</div>
<div class="a cell" style="left:1067px;top:99.5px">桑塔纳SVW7182CQi轿车</div>
<div class="a cell" style="letter-spacing:0.9px;left:1384px;top:99.5px">2007-04-28 00:00</div>
<div class="a" style="left:0;top:134px;width:1499px;height:1px;background:#ddd"></div>
<div class="a cb" style="left:11px;top:149px"></div>
<div class="a cell lnk" style="left:88px;top:143.5px">0</div>
<div class="a cell" style="left:142px;top:143.5px">李晓旋</div>
<div class="a cell red" style="left:381px;top:143.5px;letter-spacing:0.6px">lin</div>
<div class="a cell lnk" style="letter-spacing:0.3px;left:556px;top:143.5px">鲁B13VT7</div>
<div class="a cell ls" style="left:663px;top:143.5px">370284199602273640</div>
<div class="a cell lnk" style="letter-spacing:0.2px;left:861px;top:143.5px">LZWAEAGA5DB001341</div>
<div class="a cell" style="left:1067px;top:143.5px">宝骏LZW7151ABF轿车</div>
<div class="a cell" style="letter-spacing:0.9px;left:1384px;top:143.5px">2013-02-21 00:00</div>
<div class="a" style="left:0;top:178px;width:1499px;height:1px;background:#ddd"></div>
<div class="a cb" style="left:11px;top:193px"></div>
<div class="a cell lnk" style="left:88px;top:187.5px">0</div>
<div class="a cell" style="left:142px;top:187.5px">新车</div>
<div class="a cell red" style="left:381px;top:187.5px;letter-spacing:0.6px">lin</div>
<div class="a cell lnk" style="letter-spacing:0.3px;left:556px;top:187.5px">新车</div>
<div class="a cell ls" style="left:663px;top:187.5px">370212197812133020</div>
<div class="a cell lnk" style="letter-spacing:0.2px;left:861px;top:187.5px">LDC661T63G3686926</div>
<div class="a cell" style="left:1067px;top:187.5px">北京现代BH7167AY轿车</div>
<div class="a cell" style="letter-spacing:0.9px;left:1384px;top:187.5px">2019-02-18 00:00</div>
<div class="a" style="left:0;top:222px;width:1499px;height:1px;background:#ddd"></div>
<div class="a cb" style="left:11px;top:237px"></div>
<div class="a cell lnk" style="left:88px;top:231.5px">0</div>
<div class="a cell" style="left:142px;top:231.5px">青岛美之程国际物流有限公司</div>
<div class="a cell red" style="left:381px;top:231.5px;letter-spacing:0.6px">lin</div>
<div class="a cell lnk" style="letter-spacing:0.3px;left:556px;top:231.5px">鲁BG19M7</div>
<div class="a cell ls" style="left:663px;top:231.5px">370203198110250917</div>
<div class="a cell lnk" style="letter-spacing:0.2px;left:861px;top:231.5px">LHGRB184072040761</div>
<div class="a cell" style="left:1067px;top:231.5px">奥德赛HG6480BB多用途乘用车</div>
<div class="a cell" style="letter-spacing:0.9px;left:1384px;top:231.5px">2007-12-07 00:00</div>
<div class="a" style="left:0;top:266px;width:1499px;height:1px;background:#ddd"></div>
<div class="a cb" style="left:11px;top:281px"></div>
<div class="a cell lnk" style="left:88px;top:275.5px">0</div>
<div class="a cell" style="left:142px;top:275.5px">袁帅峰</div>
<div class="a cell red" style="left:381px;top:275.5px;letter-spacing:0.6px">lin</div>
<div class="a cell lnk" style="letter-spacing:0.3px;left:556px;top:275.5px">鲁B08GV7</div>
<div class="a cell ls" style="left:663px;top:275.5px">370214199204124528</div>
<div class="a cell lnk" style="letter-spacing:0.2px;left:861px;top:275.5px">LSVNF45E0HN130145</div>
<div class="a cell" style="left:1067px;top:275.5px">斯柯达SVW71615GM轿车</div>
<div class="a cell" style="letter-spacing:0.9px;left:1384px;top:275.5px">2018-01-15 00:00</div>
<div class="a" style="left:0;top:310px;width:1499px;height:1px;background:#ddd"></div>
<div class="a cb" style="left:11px;top:325px"></div>
<div class="a cell lnk" style="left:88px;top:319.5px">0</div>
<div class="a cell" style="left:142px;top:319.5px">王坤公</div>
<div class="a cell red" style="left:381px;top:319.5px;letter-spacing:0.6px">lin</div>
<div class="a cell lnk" style="letter-spacing:0.3px;left:556px;top:319.5px">鲁B8W811</div>
<div class="a cell ls" style="left:663px;top:319.5px">370223196211121539</div>
<div class="a cell lnk" style="letter-spacing:0.2px;left:861px;top:319.5px">LBEXDAEB47X457105</div>
<div class="a cell" style="left:1067px;top:319.5px">北京现代BH7162MW轿车</div>
<div class="a cell" style="letter-spacing:0.9px;left:1384px;top:319.5px">2007-01-29 00:00</div>
</div>
<div class="a" style="left:355px;top:706px;width:1535px;height:69px;border:7px solid #f83838"></div>
<div class="a" style="left:1542px;top:906px;font-size:29px;color:rgba(165,165,165,.72);line-height:1.2">激活 <span style="letter-spacing:2.3px">Windows</span></div>
<div class="a" style="left:1542px;top:945px;font-size:20.5px;color:rgba(165,165,165,.72);line-height:1.2;letter-spacing:0.3px">转到“设置”以激活 <span style="letter-spacing:1.6px">Windows</span>。</div>
<div class="a" style="left:0;top:249px;width:1895px;height:6px;background:linear-gradient(rgba(205,205,205,.9),rgba(215,215,215,.35) 45%,rgba(220,220,220,0))"></div>
<div class="a" id="pscroll"></div>
<div class="a" id="pthumb"></div>
<svg style="left:1902px;top:163px" width="11" height="6" viewBox="0 0 11 6"><path d="M0 6H11L5.5 0z" fill="#a3a3a3"/></svg>
<svg style="left:341px;top:259px" width="12" height="6" viewBox="0 0 12 6"><path d="M0 6H12L6 0z" fill="#a3a3a3"/></svg>
<svg style="left:341px;top:1006px" width="12" height="6" viewBox="0 0 12 6"><path d="M0 0H12L6 6z" fill="#505050"/></svg>
<svg style="left:1903px;top:917px" width="17" height="99" viewBox="0 0 17 99"><rect x="2" y="2" width="20" height="96" rx="6" fill="#5b626a" stroke="#3b4047" stroke-width="2"/><rect x="6" y="12" width="12" height="74" fill="#3a3f45"/><rect x="7" y="44" width="3" height="46" fill="#2aa8e0"/><circle cx="8.5" cy="88" r="6.5" fill="#2aa8e0" stroke="#3b4047" stroke-width="1.5"/><g fill="#c9d640"><rect x="12" y="54" width="2" height="2"/><rect x="12" y="58" width="2" height="2"/><rect x="12" y="62" width="2" height="2"/><rect x="12" y="66" width="2" height="2"/></g><g fill="#7fc9a0"><rect x="12" y="70" width="2" height="2"/><rect x="12" y="74" width="2" height="2"/><rect x="12" y="78" width="2" height="2"/></g></svg>
</body></html>
